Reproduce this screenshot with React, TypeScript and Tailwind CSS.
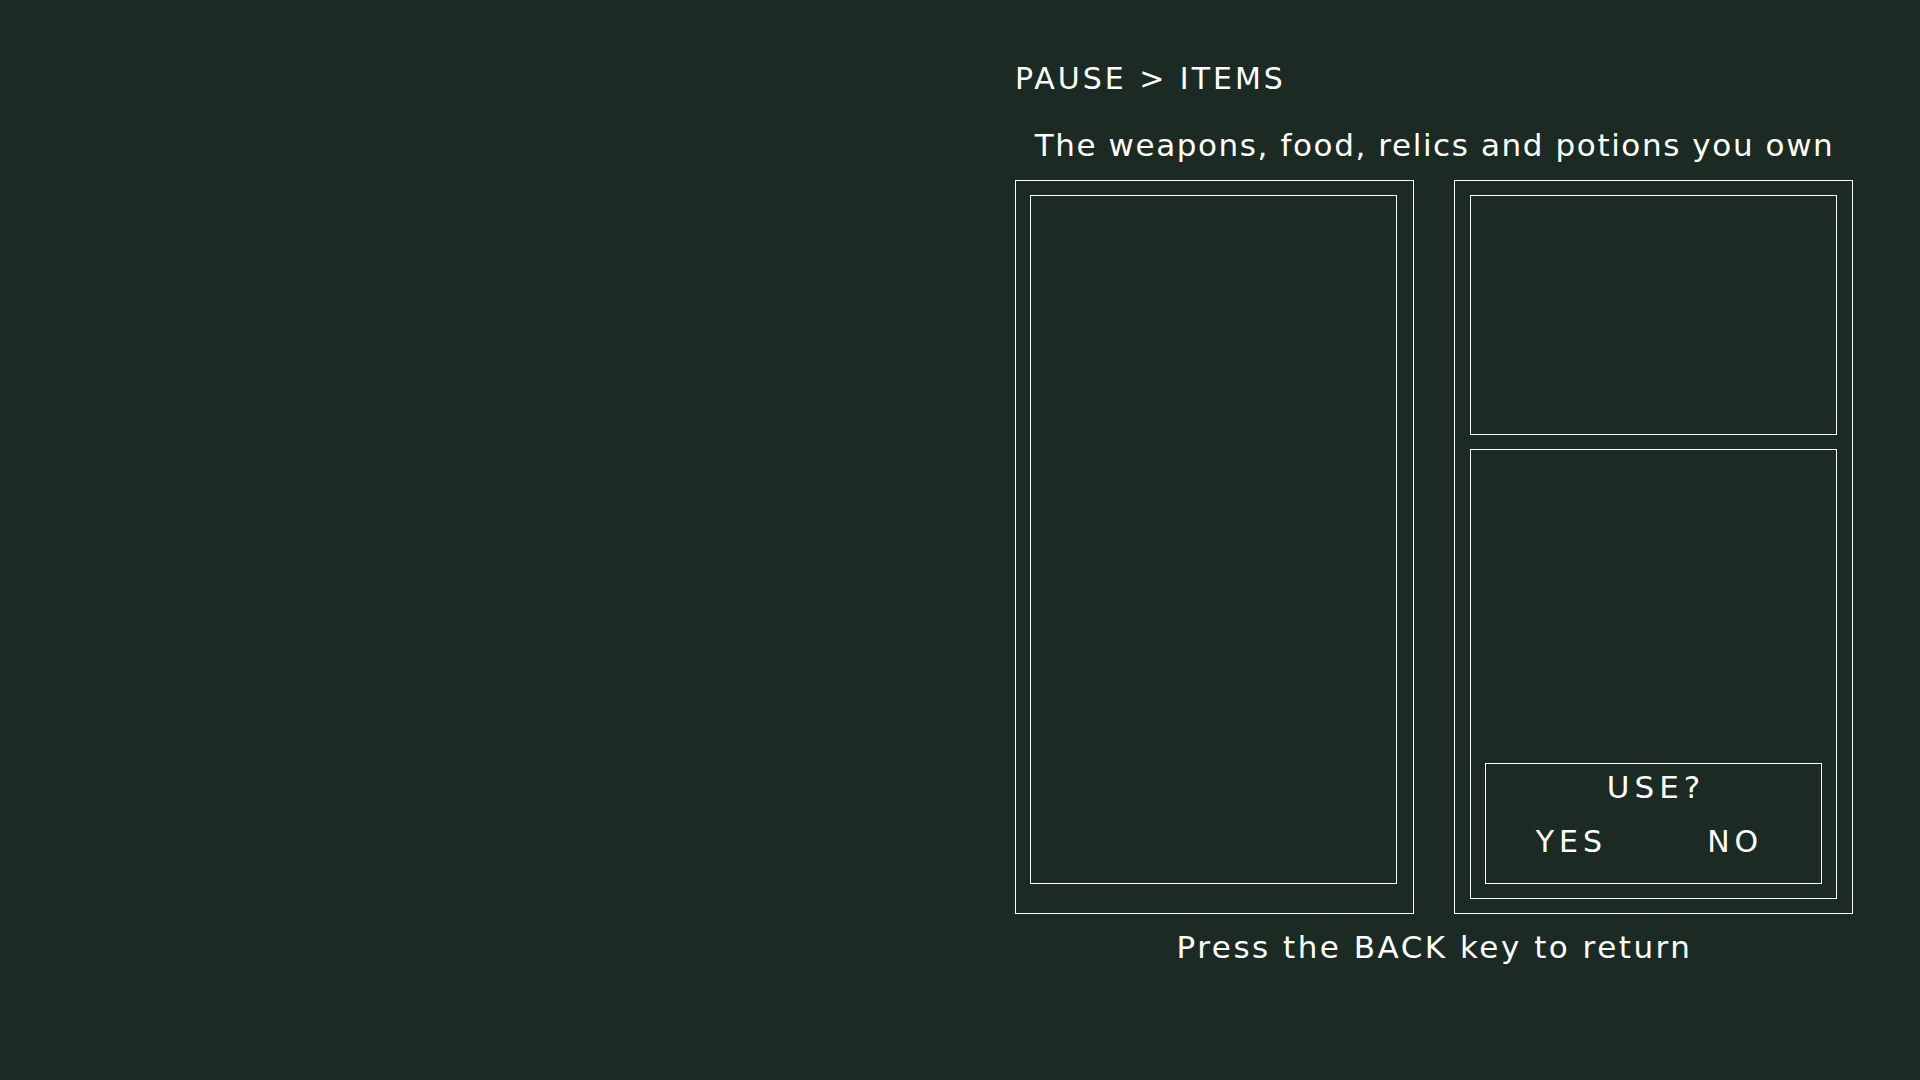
export default function App() {
  return (
    <div className="min-h-screen w-full bg-[#1c2a24] text-white" style={{ fontFamily: '"DejaVu Sans", "Liberation Sans", sans-serif' }}>
      <div className="ml-[1015px] flex w-[839px] flex-col pt-[64px]">
        <h1 className="h-[30px] text-[30px] leading-[30px] tracking-[3px]">PAUSE &gt; ITEMS</h1>
        <p className="mt-[33px] h-[36px] text-center text-[31px] leading-[36px] tracking-[1.6px]">
          The weapons, food, relics and potions you own
        </p>
        <div className="mt-[17px] flex gap-[40px]">
          {/* item list */}
          <div className="flex h-[734px] w-[399px] flex-col border border-white pb-[29px] pl-[14px] pr-[16px] pt-[14px]">
            <div className="flex-1 border border-white" />
          </div>
          {/* details */}
          <div className="flex h-[734px] w-[399px] flex-col gap-[14px] border border-white px-[15px] pb-[14px] pt-[14px]">
            <div className="h-[240px] border border-white" />
            <div className="flex flex-1 flex-col justify-end border border-white px-[14px] pb-[14px]">
              <div className="flex h-[121px] flex-col items-center border border-white pt-[5px]">
                <div className="pl-[5px] text-[31px] leading-[36px] tracking-[5px]">USE?</div>
                <div className="mt-[19px] flex w-full justify-center gap-[100px] pr-[8px] text-[30px] leading-[36px] tracking-[5px]">
                  <span>YES</span>
                  <span>NO</span>
                </div>
              </div>
            </div>
          </div>
        </div>
        <p className="mt-[15px] text-center text-[31px] leading-[36px] tracking-[2.5px]">Press the BACK key to return</p>
      </div>
    </div>
  );
}
